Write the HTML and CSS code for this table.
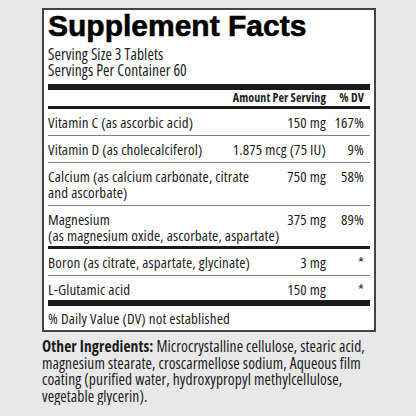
FILE: index.html
```html
<!DOCTYPE html>
<html lang="en">
<head>
<meta charset="utf-8">
<title>Supplement Facts</title>
<link rel="stylesheet" href="styles.css">
</head>
<body>
<main class="page">
  <section class="facts">
    <h1 class="title">Supplement Facts</h1>
    <div class="serving">
      <div>Serving Size 3 Tablets</div>
      <div>Servings Per Container 60</div>
    </div>
    <div class="bar bar-thick"></div>
    <div class="row head">
      <span></span>
      <span class="amt">Amount Per Serving</span>
      <span class="dv">% DV</span>
    </div>
    <div class="bar bar-mid"></div>
    <div class="row line">
      <span>Vitamin C (as ascorbic acid)</span>
      <span class="amt">150 mg</span>
      <span class="dv">167%</span>
    </div>
    <div class="row line">
      <span>Vitamin D (as cholecalciferol)</span>
      <span class="amt">1.875 mcg (75 IU)</span>
      <span class="dv">9%</span>
    </div>
    <div class="row line">
      <span>Calcium (as calcium carbonate, citrate<br>and ascorbate)</span>
      <span class="amt">750 mg</span>
      <span class="dv">58%</span>
    </div>
    <div class="row tight">
      <span>Magnesium<br>(as magnesium oxide, ascorbate, aspartate)</span>
      <span class="amt">375 mg</span>
      <span class="dv">89%</span>
    </div>
    <div class="bar bar-mid"></div>
    <div class="row line">
      <span>Boron (as citrate, aspartate, glycinate)</span>
      <span class="amt">3 mg</span>
      <span class="dv star">*</span>
    </div>
    <div class="row tight">
      <span>L-Glutamic acid</span>
      <span class="amt">150 mg</span>
      <span class="dv star">*</span>
    </div>
    <div class="bar bar-thick"></div>
    <div class="note">% Daily Value (DV) not established</div>
  </section>
  <p class="other"><strong>Other Ingredients:</strong> Microcrystalline cellulose, stearic acid, magnesium stearate, croscarmellose sodium, Aqueous film coating (purified water, hydroxypropyl methylcellulose, vegetable glycerin).</p>
</main>
</body>
</html>
```
FILE: styles.css
```css
html, body {
  margin: 0;
  padding: 0;
  background: #e8e8e8;
}
.page {
  padding: 8px 40px 0 42px;
  font-family: "Open Sans", "Liberation Sans", Arial, sans-serif;
  font-stretch: 75%;
  color: #1c1c1c;
  font-size: 15px;
  letter-spacing: 0.15px;
  line-height: 16px;
}
.facts {
  background: #fff;
  border: 2px solid #444;
  padding: 2px 4px 0 4px;
}
.title {
  margin: 0;
  font-family: "Liberation Sans", Arial, sans-serif;
  font-stretch: normal;
  font-weight: 700;
  font-size: 30px;
  letter-spacing: 0;
  line-height: 28px;
  color: #000;
  -webkit-text-stroke: 0.6px #000;
}
.serving {
  margin-top: 6px;
  font-size: 15.5px;
  letter-spacing: 0.1px;
}
.bar {
  background: #1a1a1a;
}
.bar-thick {
  height: 6px;
  margin-top: 6px;
}
.bar-mid {
  height: 3px;
}
.row {
  display: grid;
  grid-template-columns: 1fr auto 44px;
  padding: 5px 0;
}
.row.line {
  border-bottom: 1px solid #808080;
}
.row.tight {
  padding-bottom: 3px;
}
.row.head {
  font-weight: 700;
  font-size: 12px;
  letter-spacing: 0.1px;
  line-height: 15px;
  padding: 0 0 1px;
}
.amt {
  text-align: right;
}
.dv {
  text-align: right;
  padding-right: 6px;
}
.row.tight + .bar-thick {
  margin-top: 0;
}
.note {
  padding: 4px 0 4px;
}
.other {
  margin: 6px 0 0;
  font-size: 15.5px;
  letter-spacing: 0.1px;
  line-height: 16.67px;
}
.other strong {
  font-weight: 700;
}
```
